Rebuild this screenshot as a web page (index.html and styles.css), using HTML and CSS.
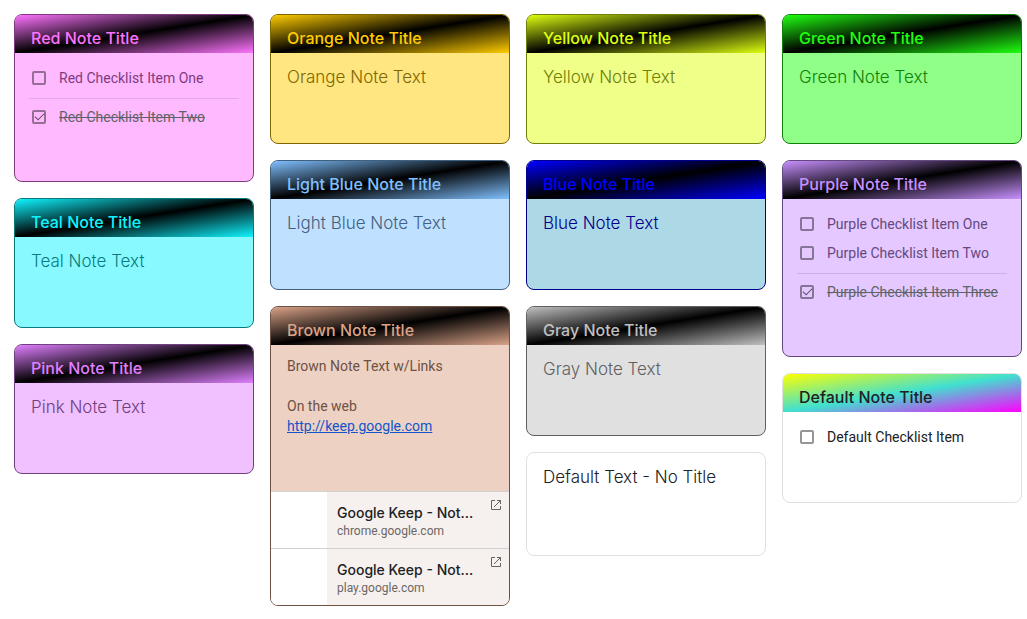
FILE: index.html
```
<!DOCTYPE html>
<html lang="en">
<head>
  <meta charset="UTF-8" />
  <meta name="viewport" content="width=device-width, initial-scale=1.0" />
  <title>Notes</title>
  <link rel="stylesheet" href="styles.css">
</head>
<body>
  <main class="board">
    <div class="column">
      <article class="note red">
        <h2>Red Note Title</h2>
        <div class="list">
          <label class="item"><input type="checkbox"><span>Red Checklist Item One</span></label>
          <hr>
          <label class="item done"><input type="checkbox" checked><span>Red Checklist Item Two</span></label>
        </div>
      </article>

      <article class="note teal">
        <h2>Teal Note Title</h2>
        <p class="text">Teal Note Text</p>
      </article>

      <article class="note pink">
        <h2>Pink Note Title</h2>
        <p class="text">Pink Note Text</p>
      </article>
    </div>

    <div class="column">
      <article class="note orange">
        <h2>Orange Note Title</h2>
        <p class="text">Orange Note Text</p>
      </article>

      <article class="note light-blue">
        <h2>Light Blue Note Title</h2>
        <p class="text">Light Blue Note Text</p>
      </article>

      <article class="note brown">
        <h2>Brown Note Title</h2>
        <p class="text small">Brown Note Text w/Links<br><br>On the web<br><a href="http://keep.google.com">http://keep.google.com</a></p>
        <a class="preview" href="https://chrome.google.com">
          <span class="thumb"></span>
          <span class="preview-body">
            <span class="preview-title">Google Keep - Not...</span>
            <span class="preview-url">chrome.google.com</span>
          </span>
          <svg class="open-icon" viewBox="0 0 12 12"><path d="M5 1.5H1.5v9h9V7M7 1.5h3.500V5M10.500 1.500L4 8"/></svg>
        </a>
        <a class="preview" href="https://play.google.com">
          <span class="thumb"></span>
          <span class="preview-body">
            <span class="preview-title">Google Keep - Not...</span>
            <span class="preview-url">play.google.com</span>
          </span>
          <svg class="open-icon" viewBox="0 0 12 12"><path d="M5 1.5H1.5v9h9V7M7 1.5h3.500V5M10.500 1.500L4 8"/></svg>
        </a>
      </article>
    </div>

    <div class="column">
      <article class="note yellow">
        <h2>Yellow Note Title</h2>
        <p class="text">Yellow Note Text</p>
      </article>

      <article class="note blue">
        <h2>Blue Note Title</h2>
        <p class="text">Blue Note Text</p>
      </article>

      <article class="note gray">
        <h2>Gray Note Title</h2>
        <p class="text">Gray Note Text</p>
      </article>

      <article class="note untitled">
        <p class="text">Default Text - No Title</p>
      </article>
    </div>

    <div class="column">
      <article class="note green">
        <h2>Green Note Title</h2>
        <p class="text">Green Note Text</p>
      </article>

      <article class="note purple">
        <h2>Purple Note Title</h2>
        <div class="list">
          <label class="item"><input type="checkbox"><span>Purple Checklist Item One</span></label>
          <label class="item"><input type="checkbox"><span>Purple Checklist Item Two</span></label>
          <hr>
          <label class="item done"><input type="checkbox" checked><span>Purple Checklist Item Three</span></label>
        </div>
      </article>

      <article class="note default">
        <h2>Default Note Title</h2>
        <div class="list">
          <label class="item"><input type="checkbox"><span>Default Checklist Item</span></label>
        </div>
      </article>
    </div>
  </main>
</body>
</html>
```

FILE: styles.css
```
* {
  box-sizing: border-box;
}

body {
  margin: 0;
  background: #fff;
  font-family: Roboto, "Liberation Sans", sans-serif;
}

.board {
  display: grid;
  grid-template-columns: repeat(4, 1fr);
  gap: 16px;
  align-items: start;
  padding: 14px 5px 13px 14px;
}

.column {
  display: flex;
  flex-direction: column;
  gap: 16px;
  min-width: 0;
}

/* every colour note sets --main, --bg and --dark */
.note {
  --bg: #fff;
  --dark: #202124;
  background: var(--bg);
  color: var(--dark);
  border: 1px solid var(--dark);
  border-radius: 8px;
  overflow: hidden;
}

.note h2 {
  margin: 0;
  padding: 11px 16px 3px;
  color: var(--main);
  background: linear-gradient(to bottom right, var(--main), black, var(--main));
  font-family: Inter, sans-serif;
  font-size: 16px;
  font-weight: 500;
  line-height: 24px;
}

.text {
  margin: 0;
  padding: 12px 16px 54px;
  font-family: Inter, sans-serif;
  font-size: 17px;
  font-weight: 300;
  line-height: 24px;
}

.small {
  padding: 11px 16px 55px;
  font-family: Roboto, sans-serif;
  font-size: 14px;
  font-weight: 400;
  line-height: 20px;
}

.text a {
  color: #1155cc;
}

/* checklists */
.list {
  min-height: 90px;
  padding: 10px 14px 50px;
}

.list hr {
  margin: 6px 0 3px;
  border: 0;
  border-top: 1px solid rgba(0, 0, 0, 0.1);
}

.item {
  display: flex;
  align-items: center;
  gap: 13px;
  height: 29px;
  padding-left: 3px;
  font-size: 14px;
  line-height: 20px;
  white-space: nowrap;
}

.item input {
  appearance: none;
  display: grid;
  place-content: center;
  flex: none;
  width: 14px;
  height: 14px;
  margin: 0;
  border: 2px solid rgba(0, 0, 0, 0.41);
  border-radius: 2px;
}

.item input:checked::before {
  content: "";
  width: 8px;
  height: 4px;
  margin-bottom: 2px;
  border-left: 1px solid rgba(0, 0, 0, 0.6);
  border-bottom: 1px solid rgba(0, 0, 0, 0.6);
  transform: rotate(-45deg);
}

.done {
  color: #5f6368;
  text-decoration: line-through;
}

/* link previews */
.preview {
  display: flex;
  height: 57px;
  border-top: 1px solid #d3d1d0;
  background: #f6f1ee;
  color: #202124;
  text-decoration: none;
}

.thumb {
  flex: none;
  width: 56px;
  background: #fff;
}

.preview-body {
  display: flex;
  flex: 1;
  flex-direction: column;
  min-width: 0;
  padding: 11px 0 0 10px;
}

.preview-title {
  font-family: Inter, sans-serif;
  font-size: 14px;
  font-weight: 500;
  line-height: 20px;
  white-space: nowrap;
}

.preview-url {
  color: #6b6765;
  font-size: 12px;
  line-height: 16px;
}

.open-icon {
  flex: none;
  width: 12px;
  height: 12px;
  margin: 7px 7px 0 0;
  fill: none;
  stroke: #66625f;
}

/* colours */
.red {
  --main: #ff73ff;
  --bg: #ffbaff;
  --dark: #803a80;
}

.orange {
  --main: #ffcc00;
  --bg: #ffe680;
  --dark: #806600;
}

.yellow {
  --main: #dfff10;
  --bg: #efff88;
  --dark: #708008;
}

.green {
  --main: #20ff10;
  --bg: #90ff88;
  --dark: #108008;
}

.teal {
  --main: #10f4ff;
  --bg: #88faff;
  --dark: #087a80;
}

.light-blue {
  --main: #80c0ff;
  --bg: #c0e0ff;
  --dark: #406080;
}

.blue {
  --main: blue;
  --bg: lightblue;
  --dark: darkblue;
}

.purple {
  --main: #c890ff;
  --bg: #e4c8ff;
  --dark: #644880;
}

.pink {
  --main: #e080ff;
  --bg: #f0c0ff;
  --dark: #704080;
}

.brown {
  --main: #daa388;
  --bg: #edd1c3;
  --dark: #6d5244;
}

.gray {
  --main: #c0c0c0;
  --bg: #e0e0e0;
  --dark: #606060;
}

.default,
.untitled {
  border-color: #e0e0e0;
}

.default h2 {
  color: #202124;
  background: linear-gradient(to bottom right, yellow, turquoise, magenta);
}

.untitled .text {
  padding-bottom: 66px;
}
```
